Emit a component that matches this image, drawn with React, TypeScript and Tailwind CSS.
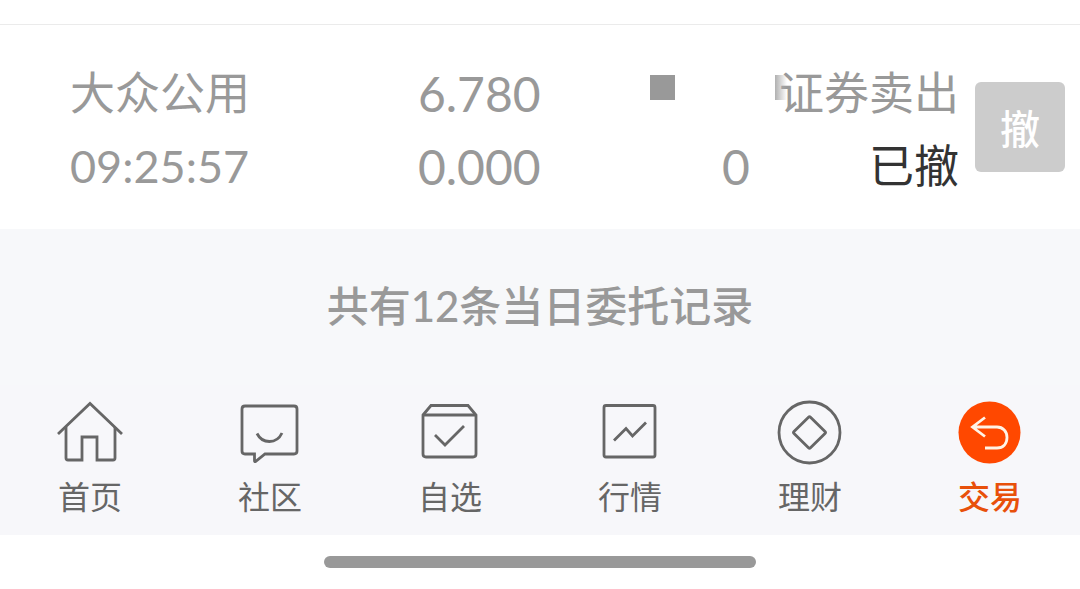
import type { ReactNode } from "react";

type Tab = { label: string; active?: boolean; icon: ReactNode };

const tabs: Tab[] = [
  {
    label: "首页",
    icon: (
      <>
        <path d="M4 40 L36 9.500 L68 40" />
        <path d="M12 33 V64 Q12 66 14 66 H28 V43 H43 V66 H59 Q61 66 61 64 V33" />
      </>
    ),
  },
  {
    label: "社区",
    icon: (
      <>
        <path d="M11 12 H60 Q63 12 63 15 V57 Q63 60 60 60 H31 L21.500 67.500 Q20.500 68 20.500 66.500 V60 H11 Q8 60 8 57 V15 Q8 12 11 12 Z" />
        <path d="M23 39.500 Q27 47.500 35.500 47.500 Q44 47.500 48 39" />
      </>
    ),
  },
  {
    label: "自选",
    icon: (
      <>
        <path d="M9 21 L17 11.500 H54 L62 21 V60 Q62 63 59 63 H12 Q9 63 9 60 Z" />
        <path d="M9 21 H62 M21 41 L31 51 L50 32" />
      </>
    ),
  },
  {
    label: "行情",
    icon: (
      <>
        <rect x="10" y="11.500" width="51" height="51.500" rx="2" />
        <path d="M20 46.500 L32 34.500 L38.500 42 L52 28.500" />
      </>
    ),
  },
  {
    label: "理财",
    icon: (
      <>
        <circle cx="35.500" cy="38.500" r="30.500" />
        <path d="M34.500 23.200 Q35.500 22.200 36.500 23.200 L51 37.500 Q52 38.500 51 39.500 L36.500 53.800 Q35.500 54.800 34.500 53.800 L20 39.500 Q19 38.500 20 37.500 Z" />
      </>
    ),
  },
  {
    label: "交易",
    active: true,
    icon: (
      <>
        <circle cx="35.500" cy="38.500" r="31" fill="#ff4800" stroke="none" />
        <path
          stroke="#fff3e6"
          d="M31 23.500 L18.500 33 L31 42.500 M19 33 H43 C49 33 53 37.500 53 43.500 C53 50 49 54 43 54 H31"
        />
      </>
    ),
  },
];

export default function App() {
  return (
    <div className="min-h-screen bg-white font-['Lato','Noto_Sans_CJK_SC',sans-serif] text-[#999999]">
      <header className="h-6" />
      <main>
        <section className="flex items-start border-t border-[#ebebeb] pr-[15px] pb-[26px] pl-[70px]">
          <div className="grid flex-1 grid-cols-[5fr_4fr_4fr_4fr] items-center pt-8 text-right text-[45px] leading-[73px]">
            <span className="text-left">大众公用</span>
            <span className="text-[48px]">6.780</span>
            <span className="flex justify-end pr-[75px] pb-3">
              <span className="size-[25px] bg-[#999999]" />
            </span>
            <span className="relative whitespace-nowrap">
              <span className="absolute top-[18px] left-[25px] h-[25px] w-3 bg-linear-to-r from-[#b0b0b0] to-transparent" />
              证券卖出
            </span>
            <span className="text-left">09:25:57</span>
            <span className="text-[48px]">0.000</span>
            <span className="text-[48px]">0</span>
            <span className="text-[#333333]">已撤</span>
          </div>
          <button
            type="button"
            className="mt-[57px] ml-4 size-[90px] rounded-md bg-[#cccccc] pt-1 text-[40px] font-medium text-white"
          >
            撤
          </button>
        </section>
        <p className="bg-[#f7f8fa] pt-[47px] pb-[49px] text-center text-[42px] leading-[60px] font-medium">
          共有12条当日委托记录
        </p>
      </main>
      <nav className="grid grid-cols-6 bg-[#f7f7fa] pt-[9px] pb-[14px]">
        {tabs.map((tab) => (
          <a
            key={tab.label}
            href="#"
            aria-current={tab.active ? "page" : undefined}
            className={
              tab.active
                ? "flex flex-col items-center text-[32px] leading-[49px] font-medium text-[#e8500a]"
                : "flex flex-col items-center text-[32px] leading-[49px] text-[#666666]"
            }
          >
            <svg
              viewBox="0 0 72 78"
              className="h-[78px] w-[72px]"
              fill="none"
              stroke="currentColor"
              strokeWidth="2.800"
              aria-hidden="true"
            >
              {tab.icon}
            </svg>
            {tab.label}
          </a>
        ))}
      </nav>
      <div className="flex justify-center pt-[21px]">
        <span className="h-3 w-2/5 rounded-full bg-[#999999]" />
      </div>
    </div>
  );
}
